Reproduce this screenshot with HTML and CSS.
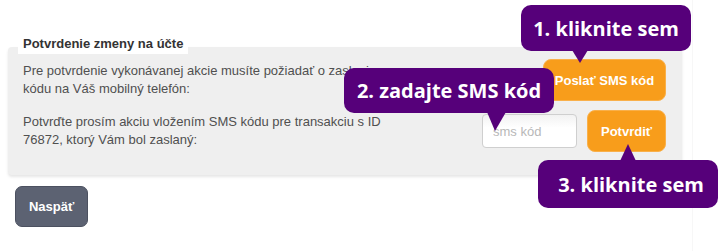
FILE: index.html
```html
<!DOCTYPE html>
<html lang="sk">
<head>
<meta charset="utf-8">
<title>Potvrdenie zmeny na účte</title>
<link rel="stylesheet" href="styles.css">
</head>
<body>
<div class="page">
  <section class="panel">
    <h2 class="legend">Potvrdenie zmeny na účte</h2>
    <div class="row row-send">
      <p class="text">Pre potvrdenie vykonávanej akcie musíte požiadať o zaslanie sms kódu na Váš mobilný telefón:</p>
      <div class="controls">
        <button class="btn btn-orange btn-send" type="button">Poslať SMS kód</button>
      </div>
    </div>
    <div class="row row-confirm">
      <p class="text">Potvrďte prosím akciu vložením SMS kódu pre transakciu s ID 76872, ktorý Vám bol zaslaný:</p>
      <div class="controls">
        <input class="sms-input" type="text" placeholder="sms kód">
        <button class="btn btn-orange btn-confirm" type="button">Potvrdiť</button>
      </div>
    </div>
  </section>
  <button class="btn btn-back" type="button">Naspäť</button>

  <div class="callout callout-1 tail-down">1. kliknite sem</div>
  <div class="callout callout-2 tail-down">2. zadajte SMS kód</div>
  <div class="callout callout-3 tail-up">3. kliknite sem</div>
</div>
</body>
</html>
```

FILE: styles.css
```css
* { box-sizing: border-box; }

html, body {
  margin: 0;
  padding: 0;
  background: #ffffff;
}

body {
  font-family: "Liberation Sans", Arial, sans-serif;
  font-size: 13px;
  color: #555555;
}

.page {
  position: relative;
  width: 693px;
  min-height: 251px;
  padding: 47px 0 0 8px;
  border-right: 1px solid #f7f7f7;
}

.panel {
  position: relative;
  width: 674px;
  height: 128px;
  background: #efefef;
  border-radius: 4px;
  box-shadow: 0 2px 3px rgba(0, 0, 0, 0.10);
  padding: 12px 16px 0 15px;
  display: flex;
  flex-direction: column;
  gap: 9px;
}

.legend {
  position: absolute;
  left: 10px;
  top: -11px;
  margin: 0;
  padding: 0 5px 2px 5px;
  background: #ffffff;
  font-size: 13px;
  font-weight: bold;
  line-height: 16px;
  color: #333333;
}

.row {
  display: flex;
  align-items: center;
  height: 42px;
}

.text {
  margin: 0;
  width: 385px;
  line-height: 18px;
  color: #505050;
}

.controls {
  margin-left: auto;
  display: flex;
  align-items: center;
  gap: 10px;
}

.btn {
  font-family: "Liberation Sans", Arial, sans-serif;
  font-size: 13px;
  font-weight: bold;
  color: #ffffff;
  cursor: pointer;
  padding: 0;
}

.btn-orange {
  height: 42px;
  background: #f89d1b;
  border: 1px solid #f9b04a;
  border-radius: 8px;
}

.btn-send { width: 123px; }
.btn-confirm { width: 79px; }

.sms-input {
  width: 95px;
  height: 34px;
  border: 1px solid #cfcfcf;
  border-radius: 4px;
  background: linear-gradient(#f2f2f2, #ffffff 40%);
  padding: 0 10px;
  font-family: "Liberation Sans", Arial, sans-serif;
  font-size: 13px;
  color: #555555;
}

.sms-input::placeholder { color: #b8b8b8; }

.btn-back {
  display: block;
  margin: 11px 0 0 7px;
  width: 73px;
  height: 41px;
  background: #5c6272;
  border: 1px solid #4c5160;
  border-radius: 7px;
}

/* Tutorial callouts overlaying the form */
.callout {
  position: absolute;
  display: flex;
  align-items: center;
  justify-content: center;
  background: #56007a;
  color: #ffffff;
  border-radius: 10px;
  font-family: "Open Sans", "Liberation Sans", sans-serif;
  font-weight: bold;
  font-size: 20px;
  white-space: nowrap;
}

.callout::after {
  content: "";
  position: absolute;
  width: 0;
  height: 0;
}

.callout-1 {
  left: 521px;
  top: 5px;
  width: 170px;
  height: 46px;
}
.callout-1::after {
  left: 51px;
  bottom: -12px;
  border-left: 8px solid transparent;
  border-right: 8px solid transparent;
  border-top: 13px solid #56007a;
}

.callout-2 {
  left: 344px;
  top: 68px;
  width: 210px;
  height: 45px;
}
.callout-2::after {
  left: 143px;
  bottom: -18px;
  border-left: 8px solid transparent;
  border-right: 11px solid transparent;
  border-top: 19px solid #56007a;
}

.callout-3 {
  left: 538px;
  top: 160px;
  width: 180px;
  height: 48px;
  padding-left: 6px;
}
.callout-3::after {
  left: 82px;
  top: -16px;
  border-left: 8px solid transparent;
  border-right: 8px solid transparent;
  border-bottom: 17px solid #56007a;
}
```
